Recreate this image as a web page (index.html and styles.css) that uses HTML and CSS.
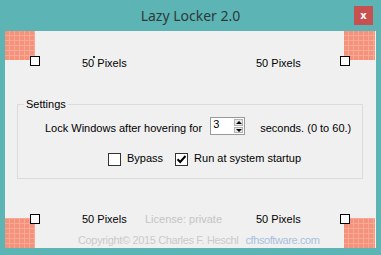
FILE: index.html
```html
<!DOCTYPE html>
<html lang="en">
<head>
  <meta charset="UTF-8">
  <title>Lazy Locker 2.0</title>
  <link rel="stylesheet" href="styles.css">
</head>
<body>
<div class="window">
  <header class="titlebar">
    <span></span>
    <h1 class="title">Lazy Locker 2.0</h1>
    <button class="close" type="button">x</button>
  </header>
  <main class="panel">
    <section class="edge edge-top">
      <div class="corner"><span class="handle handle-tl"></span></div>
      <div class="edge-mid">
        <div class="px-row">
          <span class="px px-first">50 Pixels</span>
          <span class="px">50 Pixels</span>
        </div>
      </div>
      <div class="corner corner-right"><span class="handle handle-tr"></span></div>
    </section>

    <fieldset class="settings">
      <legend>Settings</legend>
      <div class="row row-delay">
        <span class="text">Lock Windows after hovering for</span>
        <div class="spin">
          <span class="spin-value">3</span>
          <div class="spin-btns">
            <span class="spin-btn spin-up"></span>
            <span class="spin-btn spin-down"></span>
          </div>
        </div>
        <span class="text">seconds. (0 to 60.)</span>
      </div>
      <div class="row row-checks">
        <label class="check"><span class="box"></span>Bypass</label>
        <label class="check check-run">
          <span class="box">
            <svg width="11" height="11" viewBox="0 0 11 11"><path d="M1.5 5.2 L4.2 8 L9.5 2" fill="none" stroke="#000" stroke-width="2"/></svg>
          </span>Run at system startup</label>
      </div>
    </fieldset>

    <section class="edge edge-bottom">
      <div class="corner"><span class="handle handle-bl"></span></div>
      <div class="edge-mid">
        <div class="px-row">
          <span class="px px-left">50 Pixels</span>
          <span class="license">License: private</span>
          <span class="px">50 Pixels</span>
        </div>
        <div class="copy-row">
          <span class="copyright">Copyright© 2015 Charles F. Heschl</span>
          <a class="site" href="#">cfhsoftware.com</a>
        </div>
      </div>
      <div class="corner corner-right"><span class="handle handle-br"></span></div>
    </section>
  </main>
</div>
</body>
</html>
```

FILE: styles.css
```css
html, body {
  margin: 0;
  padding: 0;
  background: #5cb4b4;
  font-family: "Liberation Sans", Arial, sans-serif;
  font-size: 11px;
  line-height: 13px;
  color: #000;
}
.window {
  width: 381px;
  height: 255px;
}
.titlebar {
  height: 31px;
  display: grid;
  grid-template-columns: 1fr auto 1fr;
}
.title {
  margin: 0;
  font-family: "Noto Sans", "Open Sans", sans-serif;
  font-weight: 400;
  font-size: 14px;
  line-height: 31px;
  color: #2e3a3a;
}
.close {
  justify-self: end;
  align-self: start;
  margin: 6px 8px 0 0;
  width: 19px;
  height: 19px;
  padding: 0;
  border: none;
  background: #c75050;
  color: #fff;
  font-family: "DejaVu Sans", sans-serif;
  font-weight: 700;
  font-size: 10px;
  line-height: 17px;
}
.panel {
  margin: 0 5px;
  height: 217px;
  background: #f0f0f0;
  display: flex;
  flex-direction: column;
  white-space: nowrap;
}

/* corners */
.edge {
  display: grid;
  grid-template-columns: 30px 1fr 32px;
  flex-shrink: 0;
}
.edge-top {
  height: 67px;
  align-items: start;
}
.edge-bottom {
  flex: 1 1 auto;
  min-height: 0;
  align-items: end;
}
.corner {
  position: relative;
  width: 30px;
  height: 30px;
  background-color: #f4927b;
  background-image:
    repeating-linear-gradient(90deg, transparent 0 4px, #f7a995 4px 5px),
    repeating-linear-gradient(0deg, transparent 0 4px, #f7a995 4px 5px);
}
.edge-top .corner {
  height: 29px;
}
.corner-right {
  width: 31px;
}
.handle {
  position: absolute;
  width: 10px;
  height: 10px;
  box-sizing: border-box;
  border: 1px solid #000;
  background: #fff;
}
.handle-tl { left: 25px; top: 25px; }
.handle-tr { left: -4px; top: 25px; }
.handle-bl { left: 25px; top: -4px; }
.handle-br { left: -4px; top: -4px; }

.edge-mid {
  align-self: stretch;
}
.edge-top .edge-mid {
  padding-top: 26px;
}
.edge-bottom .edge-mid {
  padding-top: 34px;
}
.px-row {
  display: flex;
  padding-left: 47px;
}
.px-first {
  position: relative;
  width: 174px;
}
.px-first::after {
  content: "";
  position: absolute;
  left: 11px;
  top: -1px;
  width: 2px;
  height: 2px;
  background: #333;
}
.px-left {
  width: 63px;
}
.license {
  width: 111px;
  color: #c4c4c4;
}
.copy-row {
  display: flex;
  gap: 7px;
  margin-top: 8px;
  padding-left: 43px;
}
.copyright {
  color: #cacaca;
  letter-spacing: -0.35px;
}
.site {
  color: #a9c0de;
  text-decoration: none;
  letter-spacing: -0.4px;
}

/* settings group */
.settings {
  flex-shrink: 0;
  margin: 0 13px 0 12px;
  padding: 6px 0 12px 0;
  border: 1px solid #dcdcdc;
  min-width: 0;
}
.settings legend {
  margin-left: 6px;
  padding: 0 2px;
  line-height: 13px;
}
.row {
  display: flex;
  align-items: flex-start;
}
.row-delay {
  padding-left: 27px;
}
.row-delay .text {
  margin-top: 5px;
}
.spin {
  display: flex;
  margin: 0 15px 0 8px;
  width: 35px;
  height: 18px;
  box-sizing: border-box;
  border: 1px solid #9a9a9a;
  background: #fff;
}
.spin-value {
  flex: 1 1 auto;
  padding-left: 2px;
  line-height: 13px;
}
.spin-btns {
  display: flex;
  flex-direction: column;
  gap: 1px;
  padding: 1px 1px 1px 0;
}
.spin-btn {
  position: relative;
  width: 9px;
  height: 7px;
  box-sizing: border-box;
  border: 1px solid #b4b4b4;
  background: #e8e8e8;
}
.spin-btn::after {
  content: "";
  position: absolute;
  left: 1px;
  border-left: 3px solid transparent;
  border-right: 3px solid transparent;
}
.spin-up::after {
  top: 1px;
  border-bottom: 3px solid #000;
}
.spin-down::after {
  top: 1px;
  border-top: 3px solid #000;
}
.row-checks {
  margin-top: 17px;
  padding-left: 90px;
}
.check {
  display: flex;
  align-items: flex-start;
  gap: 6px;
}
.check-run {
  margin-left: 12px;
}
.box {
  margin-top: 1px;
  width: 13px;
  height: 13px;
  box-sizing: border-box;
  border: 1px solid #333;
  background: #fff;
  display: flex;
  align-items: center;
  justify-content: center;
}
```
